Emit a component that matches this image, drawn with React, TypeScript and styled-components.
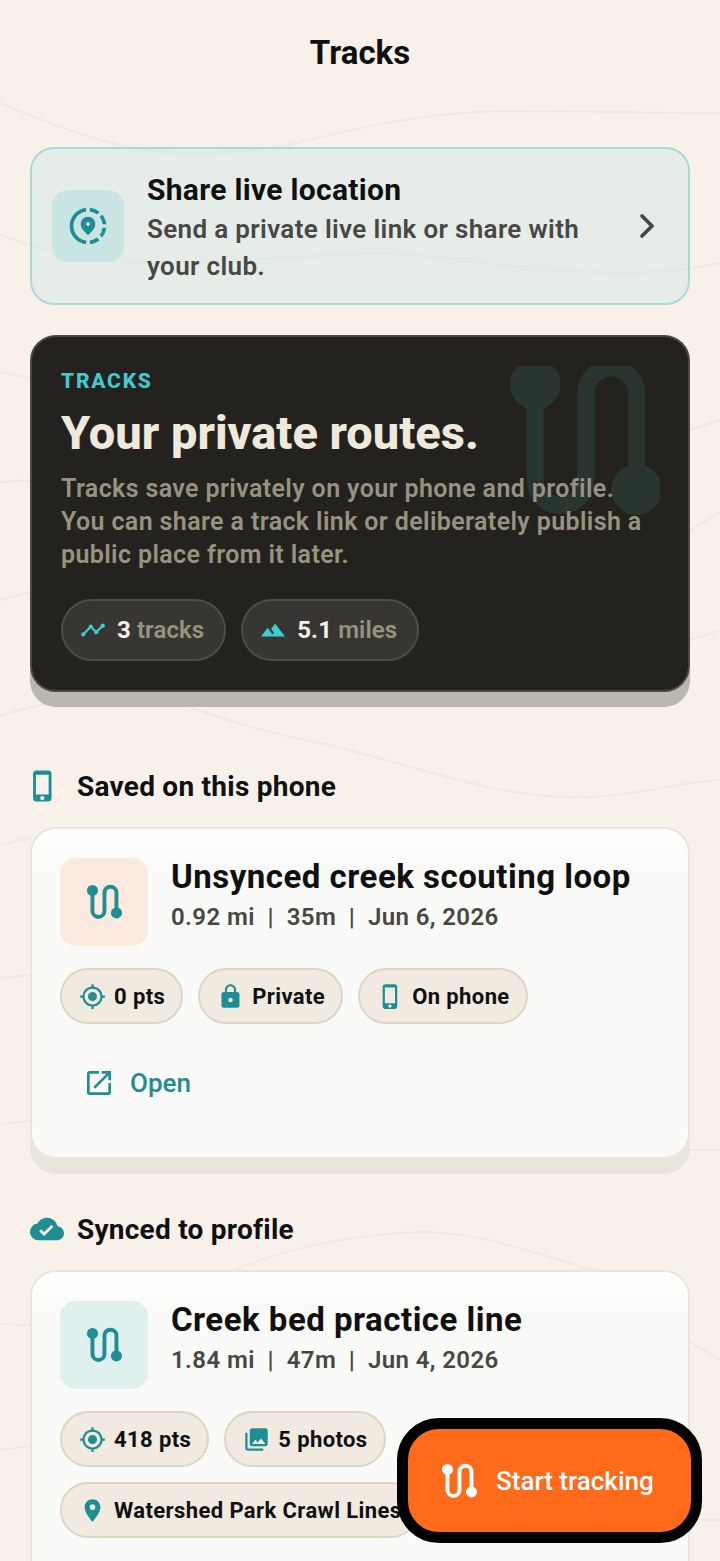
import React, { FC, ReactNode } from 'react';
import styled, { createGlobalStyle } from 'styled-components';
import { ChevronRight } from 'lucide-react';
import {
  MdCloudDone,
  MdGpsFixed,
  MdLocationOn,
  MdLock,
  MdOpenInNew,
  MdPhoneIphone,
  MdPhotoLibrary,
  MdShareLocation,
  MdTerrain,
  MdTimeline,
} from 'react-icons/md';

const teal = '#1e8e93';
const aqua = '#3ecbd2';
const ink = '#101010';

const GlobalStyle = createGlobalStyle`
  html, body {
    margin: 0;
    padding: 0;
    background: #f7f1ea;
  }
  * {
    box-sizing: border-box;
  }
`;

const Page = styled.div`
  position: relative;
  width: 720px;
  height: 1561px;
  overflow: hidden;
  background: #f7f1ea;
  font-family: Roboto, 'Noto Sans', sans-serif;
  color: ${ink};
`;

const Contours = styled.svg`
  position: absolute;
  inset: 0;
  width: 720px;
  height: 1561px;
  fill: none;
  stroke: #eee9e1;
  stroke-width: 2;
`;

const Content = styled.div`
  position: relative;
  display: flex;
  flex-direction: column;
  padding: 0 30px;
`;

const Title = styled.h1`
  margin: 0;
  height: 147px;
  padding-top: 33px;
  font-size: 33px;
  line-height: 40px;
  font-weight: 700;
  text-align: center;
`;

const ShareCard = styled.div`
  display: flex;
  align-items: center;
  height: 158px;
  padding: 0 21px 0 20px;
  border: 2px solid #a9d8d5;
  border-radius: 24px;
  background: rgba(214, 232, 229, 0.5);
`;

const ShareIconBox = styled.div`
  display: flex;
  flex: none;
  align-items: center;
  justify-content: center;
  width: 72px;
  height: 72px;
  margin-right: 23px;
  border-radius: 16px;
  background: #c9e5e3;
  color: ${teal};
  font-size: 44px;
`;

const ShareText = styled.div`
  flex: 1;
  padding-top: 5px;
`;

const ShareTitle = styled.div`
  font-size: 30px;
  line-height: 36px;
  font-weight: 700;
  letter-spacing: 0.3px;
  margin-bottom: 3px;
`;

const ShareBody = styled.div`
  font-size: 26px;
  line-height: 37px;
  font-weight: 600;
  color: #474843;
  letter-spacing: 0.35px;
`;

const Hero = styled.section`
  position: relative;
  height: 357px;
  margin-top: 30px;
  padding: 30px 29px 0;
  overflow: hidden;
  border: 2px solid #4a4843;
  border-radius: 26px;
  background: #24221e;
`;

const HeroShadow = styled.div`
  border-radius: 26px;
  box-shadow: 0 15px 0 #bab7b0;
`;

const HeroMark = styled.svg`
  position: absolute;
  top: 29px;
  right: 28px;
  width: 152px;
  height: 152px;
  fill: #28362f;
  stroke: #28362f;
`;

const Eyebrow = styled.div`
  position: relative;
  font-size: 21px;
  line-height: 28px;
  font-weight: 800;
  letter-spacing: 1.8px;
  color: ${aqua};
`;

const HeroTitle = styled.h2`
  position: relative;
  margin: 10px 0 11px;
  font-size: 47px;
  line-height: 56px;
  font-weight: 800;
  color: #efe9dc;
`;

const HeroBody = styled.p`
  position: relative;
  margin: 0;
  font-size: 25px;
  line-height: 33px;
  font-weight: 600;
  letter-spacing: 0.38px;
  color: #97937f;
`;

const Row = styled.div`
  position: relative;
  display: flex;
  flex-wrap: wrap;
  gap: 15px;
`;

const HeroStats = styled(Row)`
  margin-top: 28px;
`;

const StatChip = styled.div`
  display: flex;
  align-items: center;
  height: 62px;
  padding: 0 20px 0 17px;
  gap: 11px;
  border: 2px solid #4e4c47;
  border-radius: 31px;
  background: #383632;
  font-size: 24px;
  font-weight: 600;
  letter-spacing: 0.1px;
  color: #97937f;

  svg {
    color: ${aqua};
    font-size: 26px;
  }

  b {
    font-weight: 700;
    color: #f3efe6;
  }
`;

const SectionHeading = styled.h3<{ $top: number }>`
  display: flex;
  align-items: center;
  gap: 13px;
  height: 40px;
  margin: ${({ $top }) => $top}px 0 21px;
  font-size: 28px;
  font-weight: 700;
  letter-spacing: 0.25px;
  color: ${ink};

  svg {
    flex: none;
    color: ${teal};
    font-size: 34px;
  }
`;

const HeadingPhone = styled(MdPhoneIphone)`
  margin: 0 4px 0 -4px;
`;

const CardWrap = styled.div`
  border-radius: 26px;
  box-shadow: 0 15px 0 #e9e5dc;
`;

const Card = styled.article`
  padding: 29px 28px 0;
  min-height: 332px;
  border: 2px solid #e8e5de;
  border-radius: 26px;
  background: linear-gradient(#ffffff, #fafaf8 40px);
`;

const CardHead = styled.div`
  display: flex;
  gap: 23px;
`;

const TrackIconBox = styled.div<{ $bg: string }>`
  display: flex;
  flex: none;
  align-items: center;
  justify-content: center;
  width: 88px;
  height: 88px;
  border-radius: 16px;
  background: ${({ $bg }) => $bg};
`;

const TrackName = styled.div`
  margin-top: -2px;
  font-size: 33px;
  line-height: 42px;
  font-weight: 700;
  letter-spacing: 0.5px;
`;

const TrackMeta = styled.div`
  margin-top: 2px;
  font-size: 24px;
  line-height: 34px;
  font-weight: 600;
  letter-spacing: 0.4px;
  color: #474843;
  white-space: pre;
`;

const Chips = styled(Row)`
  margin-top: 22px;
`;

const Chip = styled.div`
  display: flex;
  align-items: center;
  gap: 8px;
  height: 56px;
  padding: 0 16px 0 17px;
  border: 2px solid #dcd5c8;
  border-radius: 28px;
  background: #f0eae0;
  font-size: 22px;
  font-weight: 700;
  letter-spacing: 0.4px;
  color: ${ink};
  white-space: nowrap;

  svg {
    flex: none;
    color: ${teal};
    font-size: 27px;
  }
`;

const OpenLink = styled.div`
  display: flex;
  align-items: center;
  gap: 15px;
  margin: 41px 0 0 23px;
  font-size: 26px;
  line-height: 36px;
  font-weight: 500;
  color: ${teal};

  svg {
    font-size: 32px;
  }
`;

const Fab = styled.button`
  position: absolute;
  left: 397px;
  top: 1418px;
  display: flex;
  align-items: center;
  gap: 19px;
  width: 305px;
  height: 125px;
  padding: 0 0 0 33px;
  border: 11px solid #000;
  border-radius: 42px;
  background: #ff6b1a;
  font-family: Roboto, sans-serif;
  font-size: 26px;
  font-weight: 500;
  color: #fff;
`;

const routeBox = '-0.3 0 24 24';

// the big faded mark is clipped flat by its box
const heroRoute = (
  <>
    <path
      d="M4 3V18A4 4 0 0 0 12 18V4.3A4 4 0 0 1 20 4.3V19.5"
      fill="none"
      strokeWidth="2.7"
    />
    <circle cx="4" cy="2.9" r="4" stroke="none" />
    <circle cx="20" cy="19.5" r="4" stroke="none" />
  </>
);

const RouteSvg = styled.svg<{ $color: string }>`
  flex: none;
  width: 36px;
  height: 36px;
  fill: ${({ $color }) => $color};
  stroke: ${({ $color }) => $color};
`;

const RouteIcon: FC<{ color: string }> = ({ color }) => (
  <RouteSvg $color={color} viewBox={routeBox}>
    <path
      d="M4 5V18A4 4 0 0 0 12 18V5.8A4 4 0 0 1 20 5.8V19.5"
      fill="none"
      strokeWidth="2.6"
    />
    <circle cx="4" cy="4.3" r="3.7" stroke="none" />
    <circle cx="20" cy="19.3" r="3.7" stroke="none" />
  </RouteSvg>
);

const Separator = '  |  ';

const TrackCard: FC<{
  name: string;
  meta: string[];
  iconBg: string;
  children: ReactNode;
}> = ({ name, meta, iconBg, children }) => (
  <CardWrap>
    <Card>
      <CardHead>
        <TrackIconBox $bg={iconBg}>
          <RouteIcon color={teal} />
        </TrackIconBox>
        <div>
          <TrackName>{name}</TrackName>
          <TrackMeta>{meta.join(Separator)}</TrackMeta>
        </div>
      </CardHead>
      {children}
    </Card>
  </CardWrap>
);

const App: FC = () => (
  <Page>
    <GlobalStyle />
    <Contours viewBox="0 0 720 1561">
      <path d="M0 103C40 120 90 140 130 147C160 154 220 156 285 146C340 132 400 118 460 113C540 108 640 114 720 113" />
      <path d="M0 235C30 245 60 255 100 260C170 268 280 256 381 253C440 255 490 265 551 270C610 274 670 275 720 263" />
      <path d="M690 430L720 420M690 530L720 512M690 640L720 630" />
      <path d="M0 372L30 378M0 482L30 480M0 600L30 592" />
      <path d="M0 716C50 700 90 695 130 695C190 700 220 725 330 745C430 770 500 800 590 797C640 795 680 782 720 780" />
      <path d="M0 845L30 838M0 978L30 975M0 1124L30 1121" />
      <path d="M690 1150L720 1150" />
      <path d="M230 1272C290 1245 370 1232 430 1232C490 1235 540 1255 600 1272" />
      <path d="M0 1324L30 1325M690 1342L720 1360M0 1450L30 1446M690 1520L720 1520" />
    </Contours>
    <Content>
      <Title>Tracks</Title>

      <ShareCard>
        <ShareIconBox>
          <MdShareLocation />
        </ShareIconBox>
        <ShareText>
          <ShareTitle>Share live location</ShareTitle>
          <ShareBody>Send a private live link or share with your club.</ShareBody>
        </ShareText>
        <ChevronRight size={40} color="#474843" strokeWidth={2.2} />
      </ShareCard>

      <HeroShadow>
        <Hero>
          <HeroMark viewBox={routeBox}>{heroRoute}</HeroMark>
          <Eyebrow>TRACKS</Eyebrow>
          <HeroTitle>Your private routes.</HeroTitle>
          <HeroBody>
            Tracks save privately on your phone and profile. You can share a
            track link or deliberately publish a public place from it later.
          </HeroBody>
          <HeroStats>
            <StatChip>
              <MdTimeline />
              <span>
                <b>3</b> tracks
              </span>
            </StatChip>
            <StatChip>
              <MdTerrain />
              <span>
                <b>5.1</b> miles
              </span>
            </StatChip>
          </HeroStats>
        </Hero>
      </HeroShadow>

      <SectionHeading $top={74}>
        <HeadingPhone />
        Saved on this phone
      </SectionHeading>
      <TrackCard
        name="Unsynced creek scouting loop"
        meta={['0.92 mi', '35m', 'Jun 6, 2026']}
        iconBg="#fce9df"
      >
        <Chips>
          <Chip>
            <MdGpsFixed />0 pts
          </Chip>
          <Chip>
            <MdLock />
            Private
          </Chip>
          <Chip>
            <MdPhoneIphone />
            On phone
          </Chip>
        </Chips>
        <OpenLink>
          <MdOpenInNew />
          Open
        </OpenLink>
      </TrackCard>

      <SectionHeading $top={50}>
        <MdCloudDone />
        Synced to profile
      </SectionHeading>
      <TrackCard
        name="Creek bed practice line"
        meta={['1.84 mi', '47m', 'Jun 4, 2026']}
        iconBg="#e0f0ef"
      >
        <Chips>
          <Chip>
            <MdGpsFixed />
            418 pts
          </Chip>
          <Chip>
            <MdPhotoLibrary />5 photos
          </Chip>
          <Chip>
            <MdLocationOn />
            Watershed Park Crawl Lines
          </Chip>
        </Chips>
      </TrackCard>
    </Content>
    <Fab>
      <RouteIcon color="#fff" />
      Start tracking
    </Fab>
  </Page>
);

export default App;
